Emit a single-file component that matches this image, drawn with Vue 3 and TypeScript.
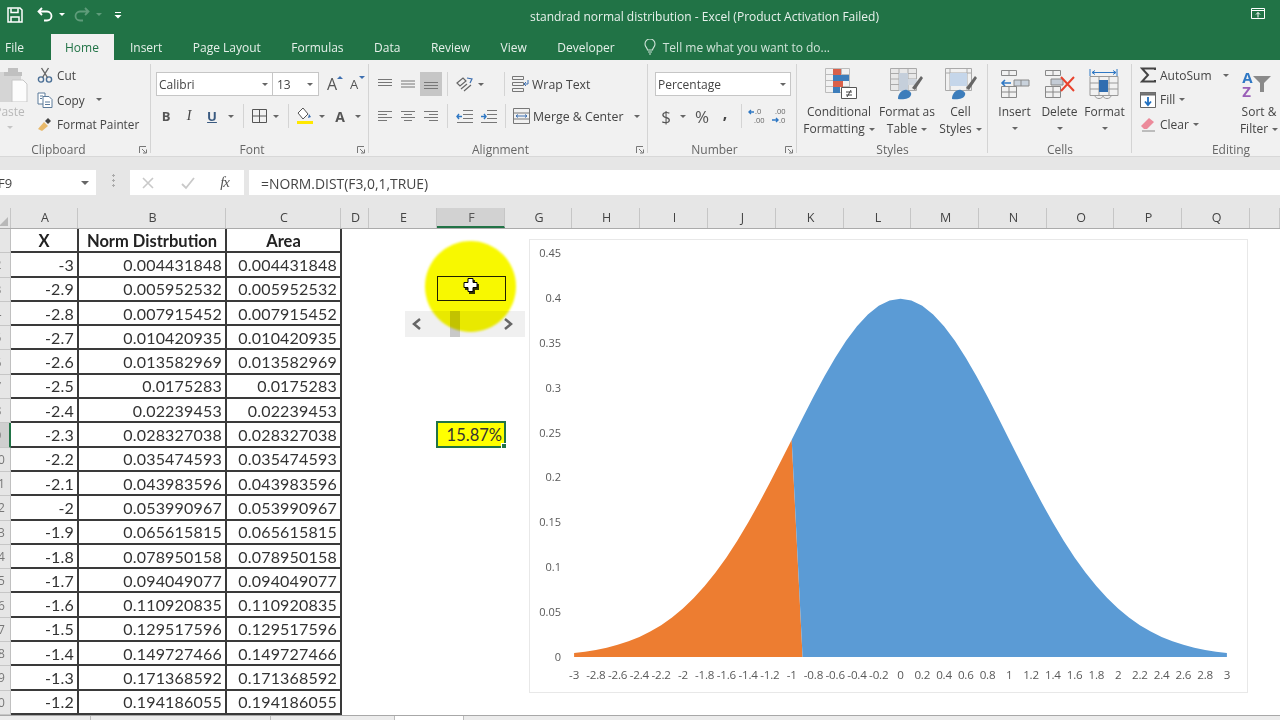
<template>
  <div class="excel">
    <!-- title bar -->
    <div class="titlebar">
      <div class="qat">
        <svg class="qat-save" width="16" height="16" viewBox="0 0 16 16" fill="none" stroke="#fff" stroke-width="1.5">
          <path d="M1 1h12l2 2v12H1z" />
          <path d="M4 1.5v4h7v-4M4 15v-5h8v5" />
        </svg>
        <svg class="qat-undo" width="17" height="15" viewBox="0 0 17 15" fill="none" stroke="#fff" stroke-width="1.8">
          <path d="M5 1 1.5 4.5 5 8M2 4.5h8a4.5 4.5 0 0 1 0 9H7" />
        </svg>
        <i class="caret light"></i>
        <svg class="qat-redo" width="17" height="15" viewBox="0 0 17 15" fill="none" stroke="#5f9c7a" stroke-width="1.8">
          <path d="M12 1l3.500 3.500L12 8M15 4.500H7a4.500 4.500 0 0 0 0 9h3" />
        </svg>
        <i class="caret dim"></i>
        <svg class="qat-more" width="8" height="8" viewBox="0 0 8 8"><path d="M1 1h6v1H1zM0.500 4h7L4 7.500z" fill="#fff" /></svg>
      </div>
      <div class="doc-title">standrad normal distribution - Excel (Product Activation Failed)</div>
      <svg class="restore" width="14" height="12" viewBox="0 0 14 12" fill="none" stroke="#fff">
        <path d="M.5.500h13v10H.500zM1 2.500h12" />
        <path d="M7 9.500V4.500M5 6.500l2-2 2 2" />
      </svg>
    </div>

    <!-- tabs -->
    <div class="tabs">
      <span v-for="t in tabs" :key="t" class="tab" :class="{ active: t === 'Home' }">{{ t }}</span>
      <span class="tell">
        <svg width="12" height="16" viewBox="0 0 12 16" fill="none" stroke="#cfe3d8" stroke-width="1.1">
          <path d="M3.500 11C3.500 9 1 8 1 5a5 5 0 0 1 10 0c0 3-2.500 4-2.500 6zM4 13h4M5 15h2" />
        </svg>
        Tell me what you want to do...
      </span>
    </div>

    <!-- ribbon -->
    <div class="ribbon">
      <section class="group g-clip">
        <div class="body clip-body">
          <div class="paste">
            <svg width="37" height="36" viewBox="0 0 37 36">
              <path d="M0 6h30v30H0z" fill="#cfcfcf" />
              <path d="M17 2h10v4h4v4H13V6h4z" fill="#b5b5b5" />
              <path d="M21 14h11l4 4v18H21z" fill="#fff" stroke="#bdbdbd" />
            </svg>
            <span class="paste-text">Paste</span>
            <i class="caret pale"></i>
          </div>
          <div class="stack">
            <div class="line-btn">
              <svg width="16" height="16" viewBox="0 0 16 16" fill="none" stroke="#4a6f96" stroke-width="1.400">
                <circle cx="4" cy="12.500" r="2.600" /><circle cx="12" cy="12.500" r="2.600" />
                <path d="M5.500 10.500 11.500 1M10.500 10.500 4.500 1" stroke="#666" />
              </svg>
              Cut
            </div>
            <div class="line-btn">
              <svg width="16" height="16" viewBox="0 0 16 16" fill="#fff" stroke="#5b7a9a">
                <path d="M1 1h7v11H1z" /><path d="M6 4.500h6l3 3v8H6z" />
                <path d="M3 4h3M3 6.500h2M8 10h5M8 12.500h5" fill="none" />
              </svg>
              Copy <i class="caret copy-caret"></i>
            </div>
            <div class="line-btn">
              <svg width="16" height="16" viewBox="0 0 16 16">
                <path d="M1 13 7 6l4 4-6 5z" fill="#e8b96a" />
                <path d="M8 5l3-3 3 3-3 3z" fill="#444" />
              </svg>
              Format Painter
            </div>
          </div>
        </div>
        <div class="label"><span>Clipboard</span><svg class="launcher" width="8" height="8" viewBox="0 0 8 8" fill="none" stroke="#777"><path d="M.5 7V.5H7M3 3l3.500 3.500M4 7h3.500V3.500" /></svg></div>
      </section>

      <section class="group g-font">
        <div class="body rows">
          <div class="row font-row1">
            <div class="combo font-name">Calibri<i class="caret"></i></div>
            <div class="combo font-size">13<i class="caret"></i></div>
            <span class="grow-a">A<i class="tri up"></i></span>
            <span class="shrink-a">A<i class="tri down"></i></span>
          </div>
          <div class="row font-row2">
            <b class="slot">B</b>
            <i class="slot italic">I</i>
            <span class="slot under">U</span>
            <span class="slot"><i class="caret"></i></span>
            <span class="slot"><i class="sep"></i></span>
            <span class="slot">
              <svg width="15" height="14" viewBox="0 0 15 14" fill="none" stroke="#555"><path d="M.5.5h14v13H.5zM7.500.5v13M.5 7h14" /></svg>
            </span>
            <span class="slot"><i class="caret"></i></span>
            <span class="slot"><i class="sep"></i></span>
            <span class="slot">
              <svg width="18" height="18" viewBox="0 0 18 18">
                <path d="M7 1 2 6l5 6 5-5z" fill="#fff" stroke="#555" /><path d="M13 7l2 3-3 1z" fill="#3d6fb0" />
                <path d="M1 14h16v3H1z" fill="#ffe800" />
              </svg>
            </span>
            <span class="slot"><i class="caret"></i></span>
            <span class="slot color-a">A</span>
            <span class="slot"><i class="caret"></i></span>
          </div>
        </div>
        <div class="label"><span>Font</span><svg class="launcher" width="8" height="8" viewBox="0 0 8 8" fill="none" stroke="#777"><path d="M.5 7V.5H7M3 3l3.500 3.500M4 7h3.500V3.500" /></svg></div>
      </section>

      <section class="group g-align">
        <div class="body rows">
          <div class="row align-row1">
            <span class="slot"><svg width="14" height="10" viewBox="0 0 14 10" stroke="#777"><path d="M0 .5h14M0 3.500h14M0 6.500h14" /></svg></span>
            <span class="slot"><svg width="14" height="10" viewBox="0 0 14 10" stroke="#777"><path d="M0 2h14M0 5h14M0 8h14" /></svg></span>
            <span class="slot pressed"><svg width="14" height="10" viewBox="0 0 14 10" stroke="#777"><path d="M0 3.500h14M0 6.500h14M0 9.500h14" /></svg></span>
            <span class="slot"><i class="sep"></i></span>
            <span class="slot">
              <svg width="17" height="15" viewBox="0 0 17 15" fill="none" stroke="#666" stroke-width="1.200">
                <path d="M1 6 7 1l3 3-6 5zM5 12l6-5M8 14l7-6" /><path d="M11 1l5 1-2 4" stroke="#3d6fb0" />
              </svg>
            </span>
            <span class="slot"><i class="caret"></i></span>
            <span></span>
            <span class="slot"><i class="sep"></i></span>
            <span class="line-btn wrap">
              <svg width="17" height="16" viewBox="0 0 17 16" fill="none" stroke="#777">
                <path d="M.5.500h11v3H.5zM.5 6.500h11v3H.5zM.5 12.500h11v3H.5z" /><path d="M16 4v4h-4M14 6l-2 2 2 2" stroke="#3d6fb0" />
              </svg>
              Wrap Text
            </span>
          </div>
          <div class="row align-row2">
            <span class="slot"><svg width="14" height="10" viewBox="0 0 14 10" stroke="#777"><path d="M0 .5h14M0 3.500h9M0 6.500h14M0 9.500h9" /></svg></span>
            <span class="slot"><svg width="14" height="10" viewBox="0 0 14 10" stroke="#777"><path d="M0 .5h14M3 3.500h8M0 6.500h14M3 9.500h8" /></svg></span>
            <span class="slot"><svg width="14" height="10" viewBox="0 0 14 10" stroke="#777"><path d="M0 .5h14M5 3.500h9M0 6.500h14M5 9.500h9" /></svg></span>
            <span class="slot"><i class="sep"></i></span>
            <span class="slot"><svg width="17" height="13" viewBox="0 0 17 13" fill="none" stroke="#777"><path d="M7 .5h10M7 4.500h10M7 8.500h10M1 12.500h16" /><path d="M6 6.500H1M3 4 1 6.500 3 9" stroke="#2f78c4" stroke-width="1.400" /></svg></span>
            <span class="slot"><svg width="17" height="13" viewBox="0 0 17 13" fill="none" stroke="#777"><path d="M7 .5h10M7 4.500h10M7 8.500h10M1 12.500h16" /><path d="M1 6.500h5M4 4l2 2.500L4 9" stroke="#2f78c4" stroke-width="1.400" /></svg></span>
            <span class="slot"><i class="sep"></i></span>
            <span class="line-btn wrap">
              <svg width="17" height="16" viewBox="0 0 17 16" fill="none" stroke="#777">
                <path d="M.5.500h16v15H.5zM.5 5h16M.5 11h16" /><path d="M3 8h11M5 6.500 3 8l2 1.500M12 6.500 14 8l-2 1.500" stroke="#3d6fb0" />
              </svg>
              Merge &amp; Center <i class="caret merge-caret"></i>
            </span>
          </div>
        </div>
        <div class="label"><span>Alignment</span><svg class="launcher" width="8" height="8" viewBox="0 0 8 8" fill="none" stroke="#777"><path d="M.5 7V.5H7M3 3l3.500 3.500M4 7h3.500V3.500" /></svg></div>
      </section>

      <section class="group g-number">
        <div class="body rows">
          <div class="row num-row1">
            <div class="combo num-format">Percentage<i class="caret"></i></div>
          </div>
          <div class="row num-row2">
            <span class="slot big-sym">$</span>
            <span class="slot"><i class="caret"></i></span>
            <span class="slot big-sym">%</span>
            <span class="slot comma">,</span>
            <span class="slot"><i class="sep"></i></span>
            <span class="slot">
              <svg width="19" height="18" viewBox="0 0 19 18" font-family="Open Sans" font-size="7.500" fill="#666">
                <path d="M1 5h5M3 3 1 5l2 2" fill="none" stroke="#2f78c4" stroke-width="1.400" />
                <text x="7" y="7">.0</text><text x="6" y="16">.00</text>
              </svg>
            </span>
            <span class="slot">
              <svg width="19" height="18" viewBox="0 0 19 18" font-family="Open Sans" font-size="7.500" fill="#666">
                <text x="5" y="7">.00</text><text x="9" y="16">.0</text>
                <path d="M2 13h6M6 11l2 2-2 2" fill="none" stroke="#2f78c4" stroke-width="1.400" />
              </svg>
            </span>
          </div>
        </div>
        <div class="label"><span>Number</span><svg class="launcher" width="8" height="8" viewBox="0 0 8 8" fill="none" stroke="#777"><path d="M.5 7V.5H7M3 3l3.500 3.500M4 7h3.500V3.500" /></svg></div>
      </section>

      <section class="group g-styles">
        <div class="body large">
          <div class="big-btn w-cond">
            <svg class="nudge" width="32" height="32" viewBox="0 0 32 32" fill="none" stroke="#9a9a9a">
              <path d="M.5.500h24v24H.5zM8.500.500v24M16.500.500v24M.5 6.500h24M.5 12.500h24M.5 18.500h24" stroke="#bbb" />
              <path d="M8 1h8v6H8z" fill="#d9604a" stroke="none" /><path d="M8 7h16v6H8z" fill="#3d7dbb" stroke="none" />
              <path d="M8 13h10v6H8z" fill="#d9604a" stroke="none" /><path d="M8 19h7v6H8z" fill="#3d7dbb" stroke="none" />
              <path d="M16.500 19.500h15v11h-15z" fill="#fff" stroke="#555" /><path d="M21 24h6M21 27h6M26 22l-4 7" stroke="#444" />
            </svg>
            <span>Conditional</span>
            <span>Formatting<i class="caret in-text"></i></span>
          </div>
          <div class="big-btn w-table">
            <svg width="34" height="32" viewBox="0 0 34 32" fill="none" stroke="#aaa">
              <path d="M.5.500h26v22H.5z" fill="#e8e8e8" /><path d="M.5 5.500h26M.5 11h26M.5 16.500h26M9 .500v22M18 .500v22" />
              <path d="M9 5h9v18H9z" fill="#c5cfdb" stroke="none" /><path d="M18 11h9v6h-9z" fill="#d0d6de" stroke="none" />
              <path d="M22 20l9-12 2 2-8 12z" fill="#666" stroke="none" /><path d="M8 31c0-6 5-10 9-9 3 1 5 3 4 5-1 4-8 5-13 4z" fill="#3d7dbb" stroke="none" />
            </svg>
            <span>Format as</span>
            <span>Table<i class="caret in-text"></i></span>
          </div>
          <div class="big-btn w-cell">
            <svg width="32" height="32" viewBox="0 0 32 32" fill="none" stroke="#aaa">
              <path d="M.5.500h26v22H.5zM.5 5h26M5 .5v22M22 .5v22" />
              <path d="M5 5h17v13H5z" fill="#c5d6ea" stroke="none" />
              <path d="M21 20l9-12 2 2-8 12z" fill="#666" stroke="none" /><path d="M7 31c0-6 5-10 9-9 3 1 5 3 4 5-1 4-8 5-13 4z" fill="#3d7dbb" stroke="none" />
            </svg>
            <span>Cell</span>
            <span>Styles<i class="caret in-text"></i></span>
          </div>
        </div>
        <div class="label plain"><span>Styles</span></div>
      </section>

      <section class="group g-cells">
        <div class="body large">
          <div class="big-btn w-ins">
            <svg width="30" height="30" viewBox="0 0 30 30" fill="none" stroke="#888">
              <path d="M1.500 1.500h15v5h-15zM9 1.500v5M1.500 17.500h15v11h-15zM9 17.500v11M1.500 23h15" />
              <path d="M14 11h15v6H14z" fill="#c9d2dc" /><path d="M21 11v6" />
              <path d="M2 14h9M5 11l-3 3 3 3" stroke="#2f78c4" stroke-width="1.600" />
            </svg>
            <span>Insert</span>
            <i class="caret alone"></i>
          </div>
          <div class="big-btn w-del">
            <svg width="32" height="30" viewBox="0 0 32 30" fill="none" stroke="#888">
              <path d="M1.500 1.500h15v5h-15zM9 1.500v5M1.500 17.500h15v11h-15zM9 17.500v11M1.500 23h15" />
              <path d="M7 10h12v6H7z" fill="#c4ccd6" />
              <path d="M17 8l13 14M30 8 17 22" stroke="#e8432e" stroke-width="2" />
            </svg>
            <span>Delete</span>
            <i class="caret alone"></i>
          </div>
          <div class="big-btn w-fmt">
            <svg width="32" height="32" viewBox="0 0 32 32" fill="none" stroke="#999">
              <path d="M1 1v7M28 1v7M3 4.500h24M3 4.500l3-2M3 4.500l3 2M27 4.500l-3-2M27 4.500l-3 2" stroke="#2f78c4" />
              <path d="M1 8.500h28v19H1zM10 8.500v19M20 8.500v19M1 15h28M1 21h28" />
              <path d="M10 12h9v12h-9z" fill="#2f6db0" stroke="none" />
              <path d="M6 27.500c0 4 8 4 8 0M14 27.500c0 4 8 4 8 0" />
            </svg>
            <span>Format</span>
            <i class="caret alone"></i>
          </div>
        </div>
        <div class="label plain"><span>Cells</span></div>
      </section>

      <section class="group g-edit">
        <div class="body edit-body">
          <div class="stack edit-stack">
            <div class="line-btn">
              <svg width="16" height="16" viewBox="0 0 16 16" fill="none" stroke="#444" stroke-width="2"><path d="M15 3V1.500H2L8 8l-6 6.500h13V13" /></svg>
              AutoSum <i class="caret sum-caret"></i>
            </div>
            <div class="line-btn">
              <svg width="16" height="16" viewBox="0 0 16 16" fill="#fff" stroke="#666">
                <path d="M.5.500h15v15H.5z" /><path d="M0 0h16v3H0z" fill="#777" />
                <path d="M8 5v8M5 9.500 8 13l3-3.500" fill="none" stroke="#1f6fc0" stroke-width="1.800" />
              </svg>
              Fill<i class="caret"></i>
            </div>
            <div class="line-btn">
              <svg width="16" height="16" viewBox="0 0 16 16"><path d="M1 10l8-8 5 4-7 7H4z" fill="#ec8a9a" /><path d="M2 15h13" stroke="#888" /></svg>
              Clear<i class="caret"></i>
            </div>
          </div>
          <div class="big-btn w-sort">
            <div class="sort-icon">
              <span class="az"><b class="az-a">A</b><b class="az-z">Z</b></span>
              <svg width="18" height="16" viewBox="0 0 18 16"><path d="M0 0h18l-7 7v9H7V7z" fill="#8a8a8a" /></svg>
            </div>
            <span>Sort &amp;</span>
            <span>Filter<i class="caret in-text"></i></span>
          </div>
        </div>
        <div class="label plain"><span>Editing</span></div>
      </section>
    </div>

    <!-- formula bar -->
    <div class="formula-bar">
      <div class="namebox"><span>F9</span><i class="caret"></i></div>
      <div class="dots"></div>
      <div class="fx-btns">
        <svg width="14" height="14" viewBox="0 0 14 14" stroke="#c9c9c9" stroke-width="1.600"><path d="M2 2l10 10M12 2 2 12" /></svg>
        <svg width="14" height="14" viewBox="0 0 14 14" fill="none" stroke="#c9c9c9" stroke-width="1.800"><path d="M1 8l4 4 8-10" /></svg>
        <em>fx</em>
      </div>
      <div class="formula">=NORM.DIST(F3,0,1,TRUE)</div>
    </div>

    <!-- sheet -->
    <div class="sheet">
      <div class="col-heads">
        <div class="corner"><i></i></div>
        <div v-for="c in columns" :key="c" class="col-head" :class="{ on: c === 'F' }">{{ c }}</div>
        <div class="col-head"></div>
      </div>

      <div class="rows-area">
        <div class="data-row">
          <div class="row-head"><span>1</span></div>
          <div class="cell head">X</div>
          <div class="cell head">Norm Distrbution</div>
          <div class="cell head">Area</div>
        </div>
        <div v-for="(r, i) in rows" :key="r.x" class="data-row">
          <div class="row-head" :class="{ on: i + 2 === 9 }"><span>{{ i + 2 }}</span></div>
          <div class="cell">{{ r.x }}</div>
          <div class="cell">{{ r.v }}</div>
          <div class="cell">{{ r.v }}</div>
        </div>
      </div>

      <!-- form controls lying on the sheet -->
      <div class="scroller">
        <svg width="10" height="12" viewBox="0 0 10 12" fill="none" stroke="#666" stroke-width="2.500"><path d="M8 1 2 6l6 5" /></svg>
        <i class="thumb"></i>
        <svg width="10" height="12" viewBox="0 0 10 12" fill="none" stroke="#666" stroke-width="2.500"><path d="M2 1l6 5-6 5" /></svg>
      </div>
      <div class="linked"></div>
      <div class="highlight"></div>
      <svg class="cursor" width="18" height="18" viewBox="0 0 18 18">
        <path d="M7 3h6v4h4v6h-4v4H7v-4H3V7h4z" fill="#000" opacity="0.8" />
        <path d="M6 1.500h5v4h4v5h-4v4H6v-4H2v-5h4z" fill="#fff" stroke="#000" />
      </svg>
      <div class="result">15.87%<i></i></div>

      <div class="chart">
        <svg width="717" height="452" viewBox="530 240 717 452" font-family="Open Sans" font-size="11" fill="#595959">
          <polygon :points="orangePts" fill="#ed7d31" />
          <polygon :points="bluePts" fill="#5b9bd5" />
          <text v-for="t in yTicks" :key="t.label" :x="561" :y="t.y + 4" text-anchor="end">{{ t.label }}</text>
          <text v-for="t in xTicks" :key="t.label" :x="t.x" y="679" text-anchor="middle" class="x-tick">{{ t.label }}</text>
        </svg>
      </div>

      <div class="bottom-bar">
        <div class="sheet-tabs">
          <span class="st-a"></span>
          <span class="st-b"></span>
          <span class="st-c"></span>
        </div>
        <div class="hscroll"></div>
      </div>
    </div>
  </div>
</template>

<script setup lang="ts">
const tabs = ['File', 'Home', 'Insert', 'Page Layout', 'Formulas', 'Data', 'Review', 'View', 'Developer']
const columns = 'ABCDEFGHIJKLMNOPQ'.split('')

const rows = [
  { x: '-3', v: '0.004431848' },
  { x: '-2.9', v: '0.005952532' },
  { x: '-2.8', v: '0.007915452' },
  { x: '-2.7', v: '0.010420935' },
  { x: '-2.6', v: '0.013582969' },
  { x: '-2.5', v: '0.0175283' },
  { x: '-2.4', v: '0.02239453' },
  { x: '-2.3', v: '0.028327038' },
  { x: '-2.2', v: '0.035474593' },
  { x: '-2.1', v: '0.043983596' },
  { x: '-2', v: '0.053990967' },
  { x: '-1.9', v: '0.065615815' },
  { x: '-1.8', v: '0.078950158' },
  { x: '-1.7', v: '0.094049077' },
  { x: '-1.6', v: '0.110920835' },
  { x: '-1.5', v: '0.129517596' },
  { x: '-1.4', v: '0.149727466' },
  { x: '-1.3', v: '0.171368592' },
  { x: '-1.2', v: '0.194186055' }
]

// chart scale, in page pixels
const baseY = 657
const pxPerUnit = 898
const toX = (z: number) => 900.5 + z * 108.8
const toY = (p: number) => baseY - p * pxPerUnit
const pdf = (z: number) => Math.exp((-z * z) / 2) / Math.sqrt(2 * Math.PI)

function curve(from: number, to: number): string[] {
  const pts: string[] = []
  for (let i = from; i <= to; i++) {
    const z = i / 10
    pts.push(`${toX(z)},${toY(pdf(z))}`)
  }
  return pts
}

const orangePts = [`${toX(-3)},${baseY}`, ...curve(-30, -10), `${toX(-0.9)},${baseY}`].join(' ')
const bluePts = [`${toX(-0.9)},${baseY}`, ...curve(-10, 30), `${toX(3)},${baseY}`].join(' ')

const yTicks = [0, 0.05, 0.1, 0.15, 0.2, 0.25, 0.3, 0.35, 0.4, 0.45].map((v) => ({
  label: String(v),
  y: toY(v)
}))

const xTicks = Array.from({ length: 31 }, (_, i) => {
  const z = (i - 15) / 5
  return { label: String(z), x: toX(z) }
})
</script>

<style>
html,
body {
  margin: 0;
  background: #fff;
}
</style>

<style scoped>
.excel {
  width: 1280px;
  height: 720px;
  overflow: hidden;
  display: flex;
  flex-direction: column;
  font-family: 'Open Sans', sans-serif;
  font-size: 12px;
  color: #444;
  filter: blur(0.35px);
}

/* carets and separators */
.caret {
  display: inline-block;
  width: 0;
  height: 0;
  border-left: 3px solid transparent;
  border-right: 3px solid transparent;
  border-top: 3px solid #666;
}
.caret.light {
  border-top-color: #fff;
  margin-left: 5px;
}
.caret.dim {
  border-top-color: #5f9c7a;
  margin-left: 6px;
}
.caret.pale {
  border-top-color: #bbb;
}
.caret.in-text {
  margin-left: 4px;
  vertical-align: middle;
}
.caret.alone {
  margin-top: 7px;
}
.sep {
  display: block;
  width: 1px;
  height: 24px;
  background: #d4d4d4;
}
.slot {
  display: flex;
  align-items: center;
  justify-content: center;
}

/* title bar */
.titlebar {
  height: 34px;
  flex: none;
  background: #217346;
  display: flex;
  align-items: center;
  color: #e8f1ec;
}
.qat {
  width: 530px;
  flex: none;
  display: flex;
  align-items: center;
  padding-left: 7px;
  margin-top: -5px;
  box-sizing: border-box;
}
.qat-undo {
  margin-left: 14px;
}
.qat-redo {
  margin-left: 8px;
}
.qat-more {
  margin-left: 12px;
}
.doc-title {
  font-size: 12px;
  white-space: nowrap;
  margin-top: -2px;
}
.restore {
  margin-left: auto;
  margin-right: 15px;
  margin-top: -6px;
}

/* tabs */
.tabs {
  height: 26px;
  flex: none;
  background: #217346;
  display: flex;
  align-items: center;
  padding-left: 5px;
  gap: 30.500px;
  color: #e6f0ea;
  font-size: 12px;
}
.tab {
  white-space: nowrap;
}
.tab.active {
  background: #f1f1f1;
  color: #217346;
  align-self: stretch;
  margin: 0 -14.500px 0 -3.500px;
  padding: 0 15px 0 14px;
  display: flex;
  align-items: center;
}
.tell {
  margin-left: -1.500px;
  display: flex;
  align-items: center;
  gap: 7px;
  color: #cfe3d8;
  white-space: nowrap;
}

/* ribbon */
.ribbon {
  height: 97px;
  flex: none;
  box-sizing: border-box;
  padding-top: 4px;
  background: #f1f1f1;
  display: flex;
  border-bottom: 1px solid #d8d8d8;
}
.group {
  position: relative;
  height: 92px;
  flex: none;
  display: flex;
  flex-direction: column;
}
.group::after {
  content: '';
  position: absolute;
  right: 0;
  top: 0;
  bottom: 3px;
  width: 1px;
  background: #d4d4d4;
}
.g-clip {
  width: 169px;
  margin-left: -18px;
}
.g-font {
  width: 218px;
}
.g-align {
  width: 279px;
}
.g-number {
  width: 149px;
}
.g-styles {
  width: 191px;
}
.g-cells {
  width: 144px;
}
.g-edit {
  width: 198px;
  flex: none;
}
.body {
  flex: 1;
  min-height: 0;
}
.label {
  height: 16px;
  padding-top: 1px;
  box-sizing: border-box;
  display: grid;
  grid-template-columns: 1fr 16px;
  align-items: center;
  text-align: center;
  color: #666;
  white-space: nowrap;
}
.label.plain {
  grid-template-columns: 1fr;
}
.launcher {
  justify-self: center;
}

/* clipboard */
.clip-body {
  display: flex;
}
.paste {
  width: 55px;
  flex: none;
  display: flex;
  flex-direction: column;
  align-items: center;
  padding-top: 2px;
  opacity: 0.8;
}
.paste-text {
  color: #aaa;
  margin-top: 1px;
  line-height: 17px;
}
.paste .caret {
  margin-top: 6px;
}
.stack {
  display: flex;
  flex-direction: column;
  margin-top: -1px;
}
.clip-body .stack {
  font-size: 11.800px;
}
.line-btn {
  height: 24.500px;
  display: flex;
  align-items: center;
  gap: 4px;
  white-space: nowrap;
}
.copy-caret {
  margin-left: 7px;
}

/* font */
.rows {
  padding-top: 8px;
  display: flex;
  flex-direction: column;
  gap: 8px;
}
.row {
  height: 24px;
  display: grid;
  align-items: stretch;
}
.font-row1 {
  margin-left: 5px;
  grid-template-columns: 117px 46px 27px 18px;
}
.font-row2 {
  margin-left: 4px;
  grid-template-columns: 22px 24px 22px 15px 10px 22px 12px 12px 22px 12px 24px 12px;
}
.combo {
  background: #fff;
  border: 1px solid #c6c6c6;
  display: flex;
  align-items: center;
  justify-content: space-between;
  padding: 0 4px 0 2px;
  font-size: 12px;
}
.font-size {
  border-left: none;
  padding-left: 4px;
  padding-right: 5px;
}
.grow-a,
.shrink-a {
  position: relative;
  display: flex;
  align-items: center;
  font-size: 16px;
  padding-left: 8px;
  color: #555;
}
.shrink-a {
  font-size: 13px;
  padding-left: 4px;
}
.tri {
  position: absolute;
  top: 4px;
  right: 3px;
  width: 0;
  height: 0;
  border-left: 3px solid transparent;
  border-right: 3px solid transparent;
}
.tri.up {
  border-bottom: 3px solid #3d6fb0;
}
.tri.down {
  border-top: 3px solid #3d6fb0;
  right: -1px;
}
.slot {
  font-size: 13px;
}
b.slot {
  font-weight: 700;
  color: #555;
}
.italic {
  font-family: 'Liberation Serif', serif;
  font-size: 14px;
}
.under {
  text-decoration: underline;
  font-weight: 700;
  color: #3a5a80;
}
.color-a {
  font-weight: 700;
  font-size: 14px;
  color: #555;
}

/* alignment */
.align-row1 {
  margin-left: 5px;
  grid-template-columns: 22px 24px 22px 11px 22px 12px 12px 10px 1fr;
}
.align-row2 {
  margin-left: 5px;
  grid-template-columns: 22px 24px 22px 11px 22px 26px 9px 1fr;
}
.pressed {
  background: #c6c6c6;
}
.wrap {
  height: auto;
  margin-left: 3px;
  gap: 3px;
  font-size: 12.300px;
}
.merge-caret {
  margin-left: 8px;
}

/* number */
.num-row1 {
  margin-left: 7px;
  grid-template-columns: 136px;
}
.num-row2 {
  margin-left: 7px;
  grid-template-columns: 22px 12px 26px 20px 12px 20px 24px;
}
.big-sym {
  font-size: 17px;
  color: #555;
}
.comma {
  font-weight: 700;
  font-size: 16px;
  align-items: flex-start;
  margin-top: -2px;
}

/* large buttons */
.large,
.edit-body {
  display: flex;
}
.big-btn {
  flex: none;
  display: flex;
  flex-direction: column;
  align-items: center;
  line-height: 17px;
  white-space: nowrap;
}
.big-btn svg {
  flex: none;
}
.big-btn > svg {
  height: 36px;
  margin-top: 2px;
  margin-bottom: 1px;
}
.big-btn > svg.nudge {
  margin-left: 4px;
}
.big-btn > span {
  height: 17px;
}
.w-cond {
  width: 84px;
}
.w-table {
  width: 52px;
}
.w-cell {
  width: 55px;
}
.w-ins {
  width: 45px;
  margin-left: 4px;
}
.w-del {
  width: 45px;
}
.w-fmt {
  width: 45px;
}
.edit-stack {
  width: 100px;
  margin-left: 8px;
}
.sum-caret {
  margin-left: 7px;
}
.w-sort {
  width: 44px;
  margin-left: -3px;
}
.sort-icon {
  height: 36px;
  margin-top: 2px;
  margin-bottom: 1px;
  margin-left: -5px;
  display: flex;
  align-items: center;
}
.az {
  display: flex;
  flex-direction: column;
  font-size: 15px;
  line-height: 14px;
}
.az-a {
  color: #2f78c4;
}
.az-z {
  color: #9a5fb8;
}

/* formula bar */
.formula-bar {
  height: 51px;
  flex: none;
  box-sizing: border-box;
  background: #e6e6e6;
  padding-top: 13px;
  padding-bottom: 13px;
  display: flex;
  align-items: stretch;
}
.namebox {
  width: 96px;
  flex: none;
  background: #fff;
  display: flex;
  align-items: center;
  justify-content: space-between;
  padding-right: 7px;
  box-sizing: border-box;
}
.namebox span {
  margin-left: -2px;
  font-size: 13px;
}
.namebox .caret {
  border-left-width: 4px;
  border-right-width: 4px;
  border-top-width: 4px;
}
.dots {
  width: 34px;
  flex: none;
  background: radial-gradient(circle, #aaa 1px, transparent 1.200px) center;
  background-size: 3px 5px;
  background-repeat: repeat-y;
  margin: 4px 0 8px;
}
.fx-btns {
  width: 114px;
  flex: none;
  background: #fff;
  display: flex;
  align-items: center;
  justify-content: space-between;
  padding: 0 15px 0 11px;
  box-sizing: border-box;
}
.fx-btns em {
  font-family: 'Liberation Serif', serif;
  font-size: 15px;
  color: #555;
  letter-spacing: -1px;
}
.formula {
  flex: 1;
  margin-left: 5px;
  background: #fff;
  display: flex;
  align-items: center;
  padding-left: 12px;
  padding-top: 1px;
  box-sizing: border-box;
  font-size: 13.900px;
}

/* sheet */
.sheet {
  position: relative;
  flex: 1;
  min-height: 0;
  background: #fff;
}
.col-heads {
  height: 20px;
  display: grid;
  grid-template-columns: 11px 67px 148px 115px 28px 68px 68px 67px 68px 68px 68px 68px 67px 68px 68px 67px 68px 68px 1fr;
  background: #e6e6e6;
  border-bottom: 1px solid #ababab;
}
.corner {
  position: relative;
  border-right: 1px solid #c6c6c6;
}
.corner i {
  position: absolute;
  right: 2px;
  bottom: 2px;
  width: 0;
  height: 0;
  border-left: 9px solid transparent;
  border-bottom: 9px solid #b8b8b8;
}
.col-head {
  display: flex;
  align-items: center;
  justify-content: center;
  padding: 0 0 2px 2px;
  box-sizing: border-box;
  font-size: 12.500px;
  color: #444;
  border-right: 1px solid #c6c6c6;
}
.col-head.on {
  background: #d2d2d2;
  border-bottom: 2px solid #217346;
  padding-bottom: 0;
  color: #555;
}
.rows-area {
  display: flex;
  flex-direction: column;
}
.data-row {
  height: 24.300px;
  display: grid;
  grid-template-columns: 11px 68px 148px 115px;
  font-family: Lato, sans-serif;
  font-size: 16px;
  color: #333;
}
.row-head {
  overflow: hidden;
  background: #e6e6e6;
  border-right: 1px solid #c0c0c0;
  border-bottom: 1px solid #c6c6c6;
  box-sizing: border-box;
  display: flex;
  align-items: center;
  font-family: 'Open Sans', sans-serif;
  font-size: 12px;
  color: #777;
}
.row-head span {
  flex: none;
  width: 26px;
  margin-left: -15px;
  text-align: center;
}
.row-head.on {
  background: #cfcfcf;
  border-right: 2px solid #217346;
}
.cell {
  box-sizing: border-box;
  border-right: 2px solid #3a3a3a;
  border-bottom: 2px solid #3a3a3a;
  display: flex;
  align-items: center;
  justify-content: flex-end;
  padding-right: 3px;
  letter-spacing: 0.200px;
  white-space: nowrap;
}
.cell.head {
  justify-content: center;
  padding: 2px 0 0;
  font-size: 16.500px;
  font-weight: 700;
  letter-spacing: 0;
  color: #222;
}

/* things on top of the grid: offsets are from the sheet's top edge at y=208 */
.scroller {
  position: absolute;
  left: 405px;
  top: 103px;
  width: 120px;
  height: 26px;
  box-sizing: border-box;
  padding: 0 12px 0 7px;
  background: #f0f0f0;
  display: flex;
  align-items: center;
  justify-content: space-between;
}
.thumb {
  position: absolute;
  left: 45px;
  top: 0;
  width: 10px;
  height: 26px;
  background: #c8c8c8;
}
.linked {
  position: absolute;
  left: 437px;
  top: 68px;
  width: 69px;
  height: 25px;
  box-sizing: border-box;
  border: 1px solid #222;
}
.highlight {
  position: absolute;
  left: 425px;
  top: 33px;
  width: 91px;
  height: 91px;
  border-radius: 50%;
  background: #f8f800;
  mix-blend-mode: multiply;
  filter: blur(1px);
}
.cursor {
  position: absolute;
  left: 462px;
  top: 69px;
}
.result {
  position: absolute;
  left: 436px;
  top: 213px;
  width: 70px;
  height: 27px;
  box-sizing: border-box;
  border: 2px solid #217346;
  background: #ffff00;
  display: flex;
  align-items: center;
  justify-content: flex-end;
  padding-right: 2px;
  font-family: Lato, sans-serif;
  font-size: 16.500px;
  color: #333;
}
.result i {
  position: absolute;
  right: -3px;
  bottom: -3px;
  width: 6px;
  height: 6px;
  background: #217346;
  border: 1px solid #fff;
  box-sizing: border-box;
}
.chart {
  position: absolute;
  left: 530px;
  top: 32px;
  width: 717px;
  height: 452px;
  background: #fff;
  outline: 1px solid #e8e8e8;
}
.chart svg {
  display: block;
}
.x-tick {
  font-size: 11.600px;
  letter-spacing: -0.200px;
}
.bottom-bar {
  position: absolute;
  left: 0;
  right: 0;
  top: 507px;
  height: 6px;
  border-top: 1px solid #a8a8a8;
  display: flex;
  background: #fff;
}
.sheet-tabs {
  width: 394px;
  display: flex;
  background: #ececec;
  border-right: 1px solid #bbb;
}
.st-a {
  width: 90px;
  border-right: 1px solid #bbb;
}
.st-b {
  width: 179px;
  border-right: 1px solid #bbb;
}
.st-c {
  flex: 1;
}
.hscroll {
  margin-left: 68px;
  flex: 1;
  background: #ececec;
  border-left: 1px solid #bbb;
}
</style>
